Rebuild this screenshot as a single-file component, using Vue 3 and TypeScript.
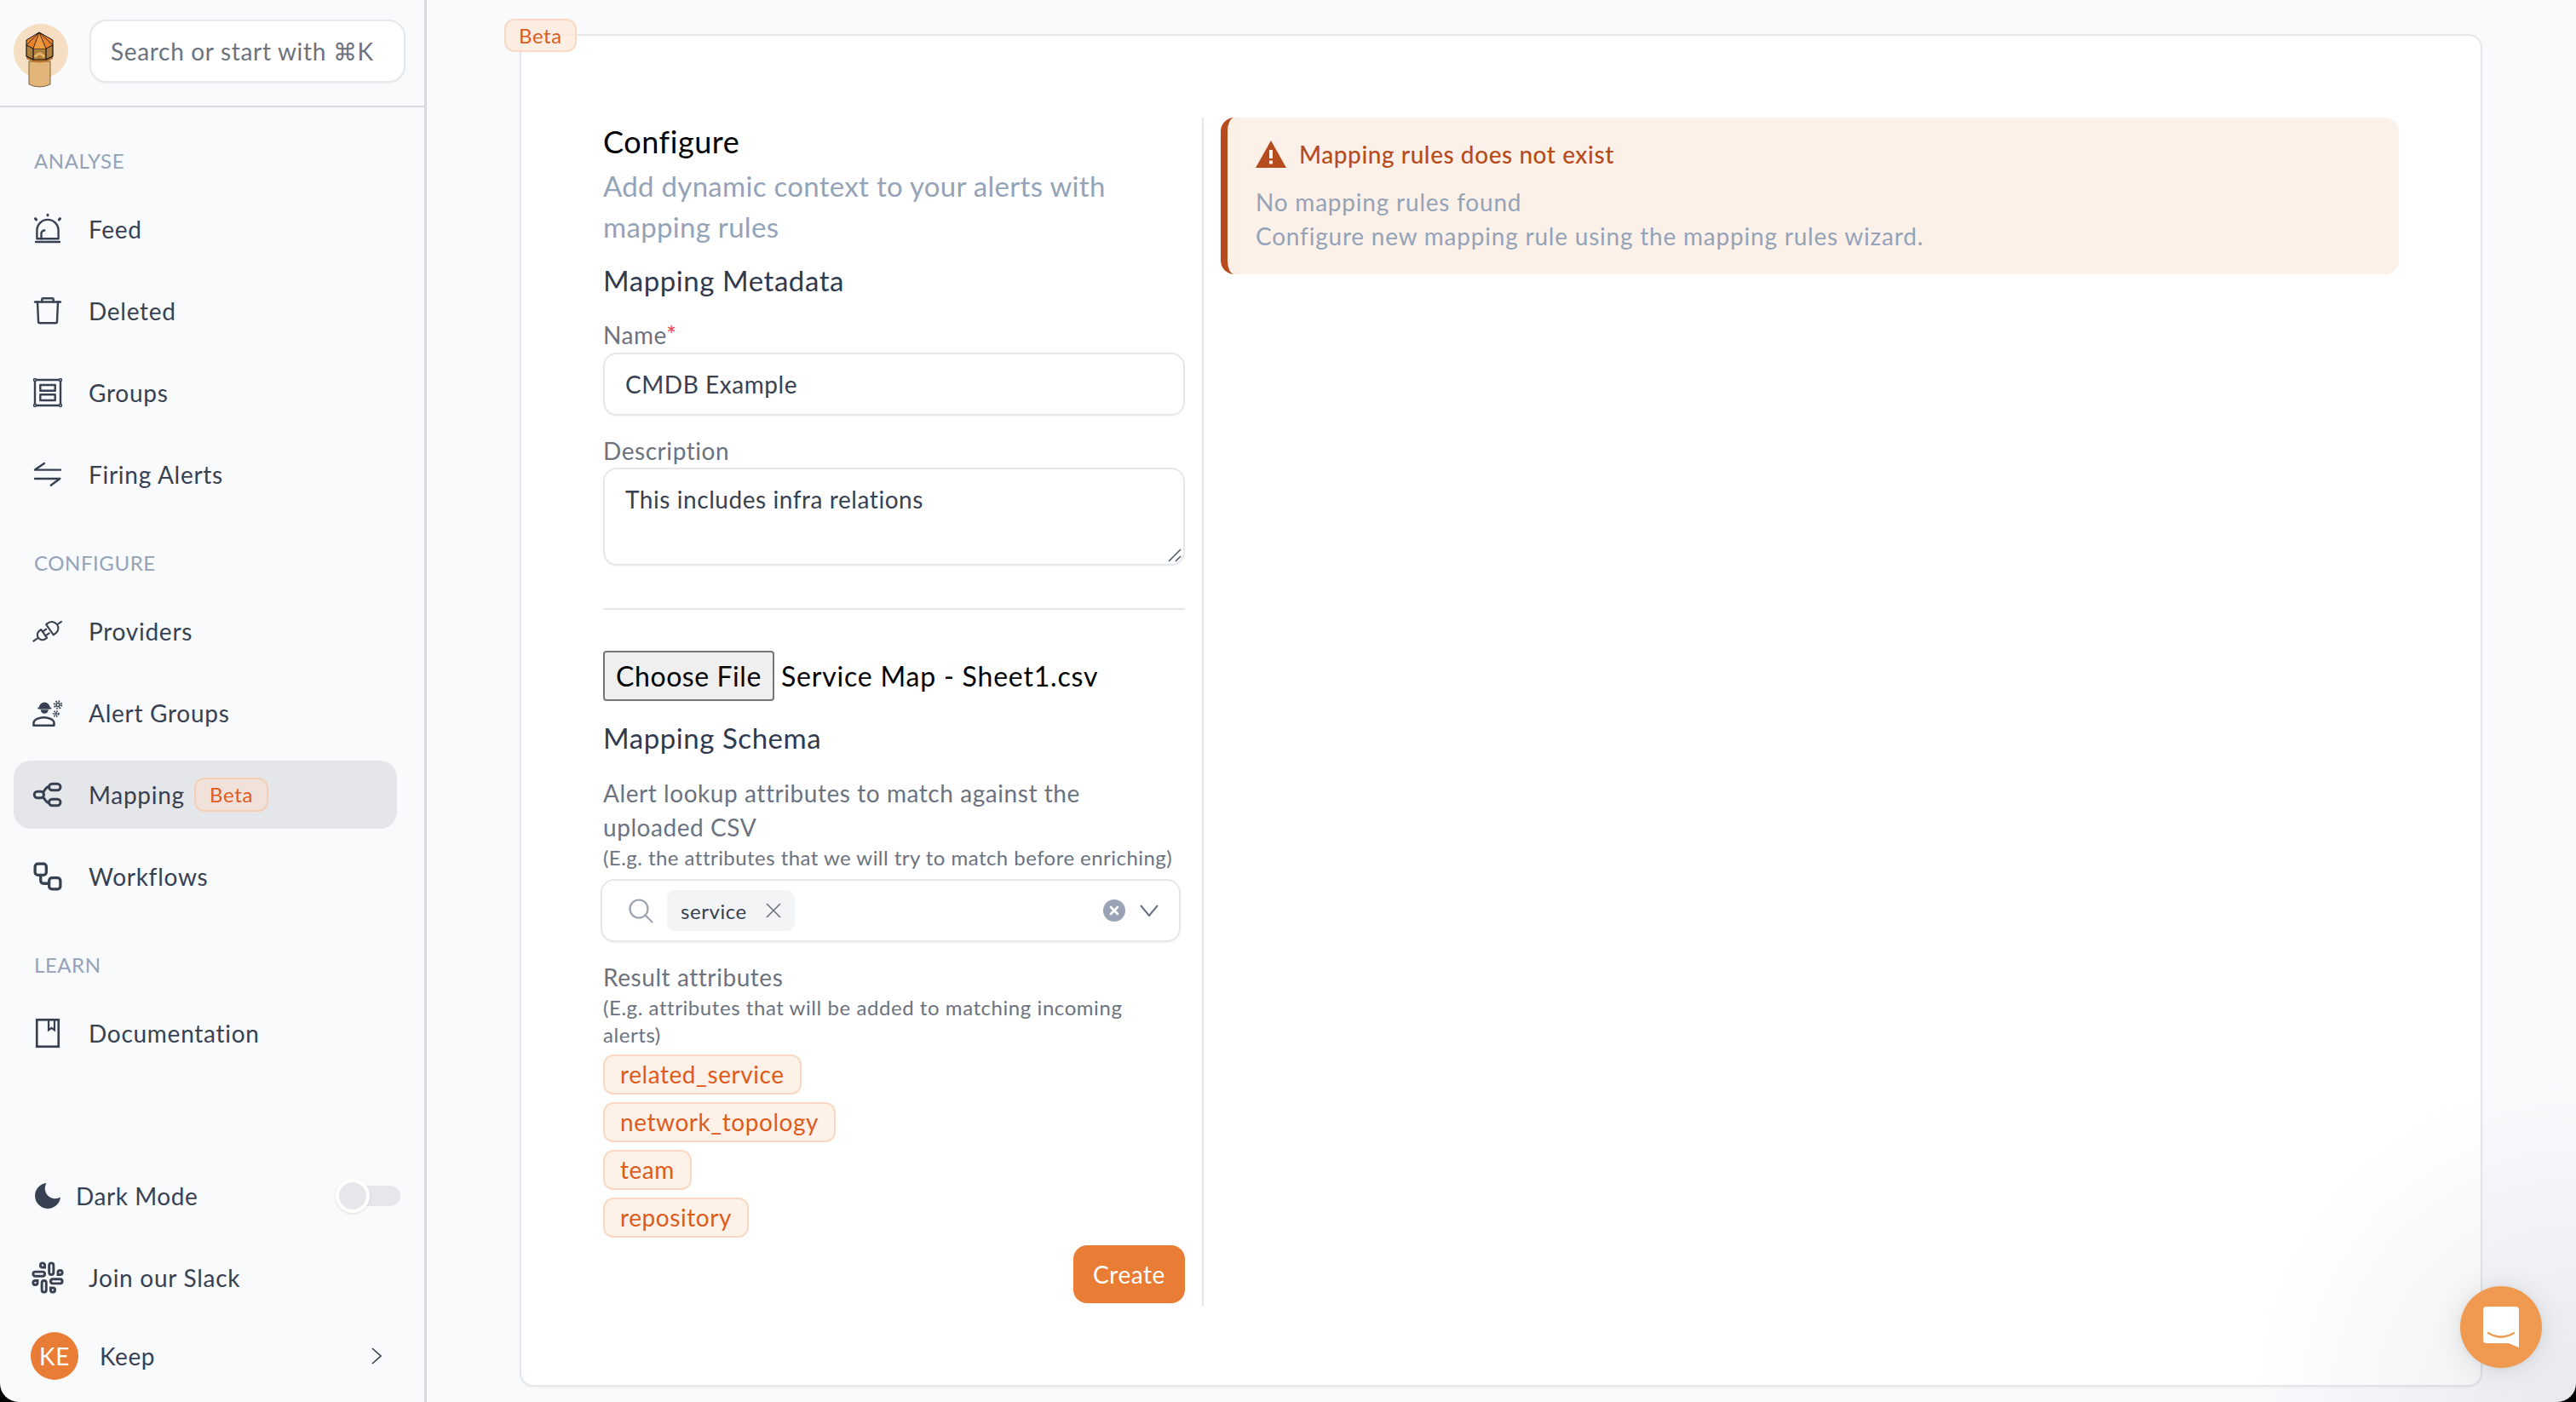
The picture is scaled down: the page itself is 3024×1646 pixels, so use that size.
<template>
  <div class="page">
    <aside class="sidebar">
      <div class="brand">
        <div class="logo">
          <svg class="tower" viewBox="0 0 64 76" width="64" height="76">
            <circle cx="32" cy="32" r="32" fill="#f6dec2" />
            <path d="M18 44v27q12.500 6 25 0V44z" fill="#e2b678" stroke="#7b6338" stroke-width="1" />
            <path d="M15 38q15.500 8 31 0v3q-15.500 9-31 0z" fill="#b9742e" />
            <path d="M15 25h31v13l-8 4H23l-8-4z" fill="#b08040" stroke="#111" stroke-width="1.200" stroke-linejoin="round" />
            <path d="M23 28v14M38 28v14" stroke="#111" stroke-width="1.200" />
            <path d="M25 39q5.500-8 11 0" stroke="#e5b367" stroke-width="3" fill="none" />
            <path d="M30 10l16 9v6l-8 4H23l-8-4v-6z" fill="#e8832d" stroke="#111" stroke-width="1" stroke-linejoin="round" />
            <path d="M30 10l-7 19h15z" fill="#ef9a3f" />
            <path d="M30 10l-7 19M30 10l8 19M30 10L15 25M30 10l16 15" stroke="#111" stroke-width="0.800" />
          </svg>
        </div>
        <div class="search">Search or start with ⌘K</div>
      </div>

      <section v-for="group in navGroups" :key="group.title" class="nav-group">
        <h3 class="nav-title">{{ group.title }}</h3>
        <a
          v-for="item in group.items"
          :key="item.label"
          class="nav-item"
          :class="{ active: item.active }"
        >
          <svg class="nav-icon" viewBox="0 0 24 24" fill="none" stroke="currentColor" stroke-width="1.600" stroke-linecap="round" stroke-linejoin="round">
            <template v-if="item.icon === 'feed'">
              <path d="M3.600 19.500V13a8.400 8.400 0 0 1 16.800 0v6.500z" />
              <path d="M7 19.500v-4A2.500 2.500 0 0 1 9.500 13" />
              <path d="M2.700 22h18.600" />
              <path d="M12 .9v.3M2.400 3.800l.7.8M21.600 3.800l-.7.8" stroke-width="2" />
            </template>
            <template v-else-if="item.icon === 'trash'">
              <path d="M2 5h20" />
              <path d="M4 5l.7 15.500a1 1 0 0 0 1 1h12.600a1 1 0 0 0 1-1L20 5" />
              <path d="M7.500 5V3.200a1 1 0 0 1 1-1h7a1 1 0 0 1 1 1V5" />
            </template>
            <template v-else-if="item.icon === 'groups'">
              <rect x="2" y="2" width="20" height="20" />
              <rect x="6.200" y="6" width="11.600" height="4.500" />
              <rect x="6.200" y="13.500" width="11.600" height="4.500" />
              <circle cx="2" cy="2" r="1" fill="#f9fafc" stroke-width="1" />
              <circle cx="22" cy="2" r="1" fill="#f9fafc" stroke-width="1" />
              <circle cx="2" cy="22" r="1" fill="#f9fafc" stroke-width="1" />
              <circle cx="22" cy="22" r="1" fill="#f9fafc" stroke-width="1" />
            </template>
            <template v-else-if="item.icon === 'swap'">
              <path d="M2 8.400h20M2 8.400l7.300-5.100" />
              <path d="M2 15.300h19.500M21.500 15.300L14.500 20.500" />
            </template>
            <template v-else-if="item.icon === 'plug'">
              <g transform="rotate(-35 12 12)" stroke-width="1.400">
                <path d="M-1.500 12H3" />
                <path d="M8.500 8v8H7a4 4 0 0 1 0-8z" />
                <path d="M8.500 10H12M8.500 14H12" />
                <path d="M14 7v10h2a5 5 0 0 0 0-10z" />
                <path d="M21 12h4" />
              </g>
            </template>
            <template v-else-if="item.icon === 'people'">
              <path d="M6 8a3.500 3.500 0 0 1 7 0z" fill="currentColor" />
              <path d="M6.500 9.500a3 3 0 0 0 6 0z" fill="currentColor" stroke="none" />
              <path d="M4.800 8.300h9.500" stroke-width="1.300" />
              <path d="M1 21.800V20c0-3 5-4.500 8-4.500s8 1.500 8 4.500v1.800z" stroke-width="1.700" />
              <circle cx="20" cy="5.700" r="2.800" stroke-width="1.400" stroke-dasharray="1.100 1.100" stroke-linecap="butt" />
              <circle cx="20" cy="5.700" r="1.300" stroke-width="1" />
              <circle cx="18.500" cy="12.700" r="2" stroke-width="1.200" stroke-dasharray="1 .9" stroke-linecap="butt" />
              <circle cx="18.500" cy="12.700" r=".8" stroke-width=".8" />
            </template>
            <template v-else-if="item.icon === 'map'">
              <rect x="13" y="3.500" width="9" height="5" rx="2.500" stroke-width="2" />
              <rect x="13" y="15.500" width="9" height="5" rx="2.500" stroke-width="2" />
              <rect x="1.500" y="9.500" width="7.500" height="5" rx="2.500" stroke-width="2" />
              <path d="M8.500 10c2-2.500 2-4 4.500-4.500M8.500 14c2 2.500 2 4 4.500 4.500" stroke-width="2" />
            </template>
            <template v-else-if="item.icon === 'flow'">
              <g transform="translate(12 12) scale(1.100) translate(-12 -12)" stroke-width="2">
                <rect x="3" y="3" width="8" height="8" rx="2" />
                <path d="M7 11v4a2 2 0 0 0 2 2h4" />
                <rect x="13" y="13" width="8" height="8" rx="2" />
              </g>
            </template>
            <template v-else-if="item.icon === 'book'">
              <rect x="3.500" y="1.500" width="17" height="21" stroke-width="1.800" stroke-linejoin="miter" />
              <path d="M12.700 1.500v8l2.300-1.600 2.300 1.600v-8" stroke-width="1.500" stroke-linejoin="miter" />
            </template>
          </svg>
          <span>{{ item.label }}</span>
          <span v-if="item.badge" class="nav-badge">{{ item.badge }}</span>
        </a>
      </section>

      <div class="sidebar-foot">
        <div class="dark-row">
          <svg class="moon" viewBox="0 0 30 30" width="30" height="30">
            <path d="M13.500 0A15 15 0 1 0 30 16.500 12 12 0 0 1 13.500 0z" fill="#374151" />
          </svg>
          <span>Dark Mode</span>
          <div class="toggle"><div class="knob"></div></div>
        </div>
        <a class="nav-item">
          <svg class="nav-icon" viewBox="1.500 1.500 21 21" fill="none" stroke="currentColor" stroke-width="1.700">
            <rect x="13" y="2" width="3" height="8" rx="1.500" />
            <path d="M19 8.500V10h1.500A1.500 1.500 0 1 0 19 8.500" />
            <rect x="8" y="14" width="3" height="8" rx="1.500" />
            <path d="M5 15.500V14H3.500A1.500 1.500 0 1 0 5 15.500" />
            <rect x="14" y="13" width="8" height="3" rx="1.500" />
            <path d="M15.500 19H14v1.500a1.500 1.500 0 1 0 1.500-1.500" />
            <rect x="2" y="8" width="8" height="3" rx="1.500" />
            <path d="M8.500 5H10V3.500A1.500 1.500 0 1 0 8.500 5" />
          </svg>
          <span>Join our Slack</span>
        </a>
        <div class="user-row">
          <div class="avatar">KE</div>
          <span>Keep</span>
          <svg class="chevron" viewBox="0 0 12 20" width="12" height="20" fill="none" stroke="#374151" stroke-width="1.600">
            <path d="M1 1l10 9-10 9" />
          </svg>
        </div>
      </div>
    </aside>

    <main class="main">
      <div class="card">
        <span class="card-badge">Beta</span>
        <div class="columns">
          <form class="form" @submit.prevent>
            <h2 class="heading">Configure</h2>
            <p class="subtitle">Add dynamic context to your alerts with mapping rules</p>
            <h3 class="section-title meta-title">Mapping Metadata</h3>
            <label class="field-label name-label">Name<span class="req">*</span></label>
            <input class="text-input" type="text" value="CMDB Example" />
            <label class="field-label desc-label">Description</label>
            <div class="area-wrap">
              <textarea class="text-area" :value="description"></textarea>
              <svg class="grip" viewBox="0 0 16 16" width="16" height="16" stroke="#4b5563" stroke-width="1.500">
                <path d="M1 15L15 1M9 15l6-6" />
              </svg>
            </div>
            <div class="rule"></div>
            <div class="file-row">
              <button type="button" class="file-btn">Choose File</button>
              <span class="file-name">Service Map - Sheet1.csv</span>
            </div>
            <h3 class="section-title schema-title">Mapping Schema</h3>
            <div class="field-label lookup-label">Alert lookup attributes to match against the uploaded CSV</div>
            <div class="hint first-hint">(E.g. the attributes that we will try to match before enriching)</div>
            <div class="multi-select">
              <svg class="select-search" viewBox="0 0 30 30" width="30" height="30" fill="none" stroke="#9ca3af" stroke-width="2.200" stroke-linecap="round">
                <circle cx="13" cy="13" r="10.500" />
                <path d="M21 21l7.500 7.500" />
              </svg>
              <div class="select-chip">
                <span>service</span>
                <svg viewBox="0 0 18 18" width="18" height="18" fill="none" stroke="#6b7280" stroke-width="1.600">
                  <path d="M1 1l16 16M17 1L1 17" />
                </svg>
              </div>
              <svg class="select-clear" viewBox="0 0 26 26" width="26" height="26">
                <circle cx="13" cy="13" r="13" fill="#9aa3b5" />
                <path d="M9 9l8 8M17 9l-8 8" stroke="#fff" stroke-width="2.600" stroke-linecap="round" />
              </svg>
              <svg class="select-caret" viewBox="0 0 22 14" width="22" height="14" fill="none" stroke="#6b7280" stroke-width="2">
                <path d="M1 1l10 12L21 1" />
              </svg>
            </div>
            <div class="field-label result-label">Result attributes</div>
            <div class="hint">(E.g. attributes that will be added to matching incoming alerts)</div>
            <div class="attr-list">
              <span v-for="attr in attributes" :key="attr" class="attr">{{ attr }}</span>
            </div>
            <div class="actions">
              <button type="submit" class="create-btn">Create</button>
            </div>
          </form>

          <div class="result">
            <div class="callout">
              <div class="callout-head">
                <svg viewBox="0 0 36 32" width="36" height="32">
                  <path d="M18 0L36 32H0z" fill="#b64c1e" />
                  <rect x="16" y="11" width="4" height="10" fill="#fcf1e9" />
                  <rect x="16" y="23.500" width="4" height="4" fill="#fcf1e9" />
                </svg>
                <span>Mapping rules does not exist</span>
              </div>
              <p class="callout-body">No mapping rules found<br />Configure new mapping rule using the mapping rules wizard.</p>
            </div>
          </div>
        </div>
      </div>
      <div class="corner-shade"></div>
      <div class="chat-bubble">
        <svg viewBox="0 0 42 48" width="42" height="48">
          <path d="M4 0h34a4 4 0 0 1 4 4v44l-12-5H4a4 4 0 0 1-4-4V4a4 4 0 0 1 4-4z" fill="#fff" />
          <path d="M6 31q15 9 30 0" fill="none" stroke="#f09a51" stroke-width="2.400" stroke-linecap="round" />
        </svg>
      </div>
    </main>
  </div>
</template>

<script setup lang="ts">
interface NavItem {
  label: string
  icon: string
  active?: boolean
  badge?: string
}

interface NavGroup {
  title: string
  items: NavItem[]
}

const navGroups: NavGroup[] = [
  {
    title: 'ANALYSE',
    items: [
      { label: 'Feed', icon: 'feed' },
      { label: 'Deleted', icon: 'trash' },
      { label: 'Groups', icon: 'groups' },
      { label: 'Firing Alerts', icon: 'swap' }
    ]
  },
  {
    title: 'CONFIGURE',
    items: [
      { label: 'Providers', icon: 'plug' },
      { label: 'Alert Groups', icon: 'people' },
      { label: 'Mapping', icon: 'map', active: true, badge: 'Beta' },
      { label: 'Workflows', icon: 'flow' }
    ]
  },
  {
    title: 'LEARN',
    items: [{ label: 'Documentation', icon: 'book' }]
  }
]

const description = 'This includes infra relations'
const attributes = ['related_service', 'network_topology', 'team', 'repository']
</script>

<style>
html,
body {
  margin: 0;
  background: #000;
}
</style>

<style scoped>
.page {
  display: flex;
  width: 3024px;
  height: 1646px;
  overflow: hidden;
  background: #f9fafc;
  border-radius: 0 0 22px 22px;
  font-family: Lato, 'Noto Sans', sans-serif;
  font-size: 28px;
  letter-spacing: 0.02em;
  color: #374151;
}

/* sidebar */
.sidebar {
  display: flex;
  flex-direction: column;
  flex: 0 0 501px;
  box-sizing: border-box;
  border-right: 3px solid #d6d9e0;
}
.brand {
  display: flex;
  align-items: center;
  gap: 25px;
  box-sizing: border-box;
  height: 126px;
  padding: 0 22px 4px 16px;
  border-bottom: 2px solid #d6d9e0;
}
.logo {
  width: 64px;
  height: 76px;
  margin-top: 12px;
}
.tower {
  display: block;
}
.search {
  flex: 1;
  height: 74px;
  box-sizing: border-box;
  padding-left: 23px;
  line-height: 70px;
  letter-spacing: 0.024em;
  background: #fff;
  border: 2px solid #e5e7eb;
  border-radius: 20px;
  box-shadow: 0 1px 2px rgba(0, 0, 0, 0.05);
  color: #6b7280;
}
.nav-group {
  display: flex;
  flex-direction: column;
  gap: 16px;
  margin-top: 47px;
  padding: 0 32px 0 16px;
}
.nav-group + .nav-group {
  margin-top: 48px;
}
.nav-title {
  margin: 0 0 8px 24px;
  font-size: 24px;
  line-height: 32px;
  font-weight: 400;
  color: #94a3b8;
}
.nav-item {
  display: flex;
  align-items: center;
  height: 80px;
  padding-left: 22px;
  letter-spacing: 0.026em;
  border-radius: 20px;
}
.nav-item.active {
  background: #e5e6ea;
}
.nav-icon {
  flex: none;
  width: 36px;
  height: 36px;
  margin-right: 30px;
  color: #374151;
  overflow: visible;
}
.nav-badge {
  margin-left: 11px;
  padding: 0 16px;
  line-height: 36px;
  font-size: 24px;
  color: #dd5b1c;
  background: #f0e2da;
  border: 2px solid #f3cfb8;
  border-radius: 12px;
}
.sidebar-foot {
  display: flex;
  flex-direction: column;
  margin-top: auto;
  padding: 0 0 26px 16px;
}
.sidebar-foot .nav-item {
  margin: 24px 0;
}
.dark-row {
  display: flex;
  align-items: center;
  height: 64px;
  padding-left: 25px;
}
.moon {
  margin-right: 18px;
}
.toggle {
  position: relative;
  width: 75px;
  height: 24px;
  margin-left: auto;
  margin-right: 28px;
  background: #e5e7eb;
  border-radius: 12px;
}
.knob {
  position: absolute;
  left: -1px;
  top: -8px;
  width: 32px;
  height: 32px;
  background: #e5e7eb;
  border: 4px solid #fff;
  border-radius: 50%;
  box-shadow: 0 1px 3px rgba(0, 0, 0, 0.12);
}
.user-row {
  display: flex;
  align-items: center;
  height: 56px;
  padding-left: 20px;
}
.avatar {
  width: 56px;
  height: 56px;
  margin-right: 25px;
  line-height: 56px;
  text-align: center;
  color: #fff;
  background: #e97d36;
  border-radius: 50%;
}
.chevron {
  margin-left: auto;
  margin-right: 50px;
}

/* main */
.main {
  position: relative;
  flex: 1;
  padding: 40px 110px 18px 109px;
}
.card {
  position: relative;
  box-sizing: border-box;
  height: 1588px;
  padding: 96px;
  background: #fff;
  border: 2px solid #e5e7eb;
  border-radius: 16px;
  box-shadow: 0 1px 2px rgba(0, 0, 0, 0.05);
}
.card-badge {
  position: absolute;
  left: -20px;
  top: -20px;
  padding: 0 15px;
  line-height: 35px;
  font-size: 24px;
  color: #dd5b1c;
  background: rgba(251, 232, 218, 0.75);
  border: 2px solid #f9d9c4;
  border-radius: 12px;
}
.columns {
  display: flex;
  align-items: flex-start;
  gap: 20px;
}
.form {
  display: flex;
  flex-direction: column;
  flex: 0 0 705px;
  box-sizing: border-box;
  height: 1395px;
  padding-right: 20px;
  border-right: 2px solid #e5e7eb;
}
.result {
  flex: 1;
}
.heading {
  margin: 0;
  font-size: 36px;
  line-height: 56px;
  font-weight: 400;
  color: #000;
}
.subtitle {
  margin: 0;
  font-size: 33px;
  line-height: 48px;
  letter-spacing: 0.009em;
  color: #94a3b8;
}
.section-title {
  margin: 0;
  font-size: 33px;
  line-height: 48px;
  font-weight: 400;
  color: #2f3a4f;
}
.meta-title {
  margin-top: 15px;
}
.schema-title {
  margin-top: 19px;
}
.field-label {
  display: block;
  line-height: 40px;
  color: #6b7280;
}
.name-label {
  margin-top: 20px;
}
.req {
  color: #ef4444;
}
.text-input,
.text-area {
  display: block;
  width: 100%;
  box-sizing: border-box;
  margin: 1px 0 0;
  padding: 0 24px;
  font: inherit;
  letter-spacing: inherit;
  color: #374151;
  background: #fff;
  border: 2px solid #e5e7eb;
  border-radius: 16px;
  box-shadow: 0 1px 2px rgba(0, 0, 0, 0.05);
  outline: none;
}
.text-input {
  height: 74px;
}
.area-wrap {
  position: relative;
}
.text-area {
  height: 115px;
  margin-top: 0;
  padding-top: 16px;
  line-height: 1.4;
  resize: none;
}
.grip {
  position: absolute;
  right: 4px;
  bottom: 4px;
}
.desc-label {
  margin-top: 21px;
}
.rule {
  height: 2px;
  margin-top: 50px;
  background: #e5e7eb;
}
.file-row {
  display: flex;
  align-items: center;
  gap: 8px;
  margin-top: 48px;
  font-size: 32px;
  color: #000;
}
.file-name {
  letter-spacing: 0.025em;
}
.file-btn {
  width: 201px;
  height: 59px;
  padding: 0;
  font: inherit;
  letter-spacing: inherit;
  color: #000;
  background: #efefef;
  border: 2px solid #767676;
  border-radius: 4px;
}
.lookup-label {
  margin-top: 21px;
}
.hint {
  font-size: 24px;
  line-height: 32px;
  color: #6b7280;
}
.first-hint {
  letter-spacing: 0.019em;
}
.multi-select {
  display: flex;
  align-items: center;
  box-sizing: border-box;
  width: 681px;
  height: 74px;
  margin: 9px 0 0 -3px;
  padding: 0 24px 0 30px;
  background: #fff;
  border: 2px solid #e5e7eb;
  border-radius: 16px;
  box-shadow: 0 1px 2px rgba(0, 0, 0, 0.05);
}
.select-chip {
  display: flex;
  align-items: center;
  justify-content: space-between;
  box-sizing: border-box;
  width: 150px;
  height: 48px;
  margin-left: 16px;
  padding: 0 16px;
  font-size: 24px;
  background: #f3f4f6;
  border-radius: 10px;
}
.select-clear {
  margin-left: auto;
}
.select-caret {
  margin-left: 17px;
}
.result-label {
  margin-top: 21px;
}
.attr-list {
  display: flex;
  flex-direction: column;
  align-items: flex-start;
  gap: 9px;
  margin-top: 7px;
}
.attr {
  box-sizing: border-box;
  height: 47px;
  padding: 0 18px;
  line-height: 43px;
  color: #dd5b1c;
  background: #fdf1e8;
  border: 2px solid #f9d9c4;
  border-radius: 12px;
}
.actions {
  display: flex;
  justify-content: flex-end;
  margin-top: 9px;
}
.create-btn {
  width: 131px;
  height: 68px;
  padding: 0;
  font: inherit;
  letter-spacing: inherit;
  color: #fff;
  background: #e97d36;
  border: none;
  border-radius: 16px;
}
.callout {
  box-sizing: border-box;
  height: 184px;
  padding: 26px 33px;
  background: #fcf1e9;
  border-left: 8px solid #b64c1e;
  border-radius: 16px;
}
.callout-head {
  display: flex;
  align-items: center;
  gap: 15px;
  font-weight: 500;
  color: #b64c1e;
}
.callout-body {
  margin: 19px 0 0;
  line-height: 40px;
  letter-spacing: 0.028em;
  color: #94a3b8;
}

/* launcher */
.corner-shade {
  position: absolute;
  right: 0;
  bottom: 0;
  width: 500px;
  height: 500px;
  background: radial-gradient(circle at 100% 100%, rgba(29, 39, 59, 0.08), rgba(29, 39, 59, 0) 55%);
  pointer-events: none;
}
.chat-bubble {
  position: absolute;
  right: 40px;
  bottom: 40px;
  display: flex;
  align-items: center;
  justify-content: center;
  width: 96px;
  height: 96px;
  background: #f09a51;
  border-radius: 50%;
  box-shadow: 0 1px 6px rgba(0, 0, 0, 0.06), 0 2px 32px rgba(0, 0, 0, 0.1);
}
</style>
